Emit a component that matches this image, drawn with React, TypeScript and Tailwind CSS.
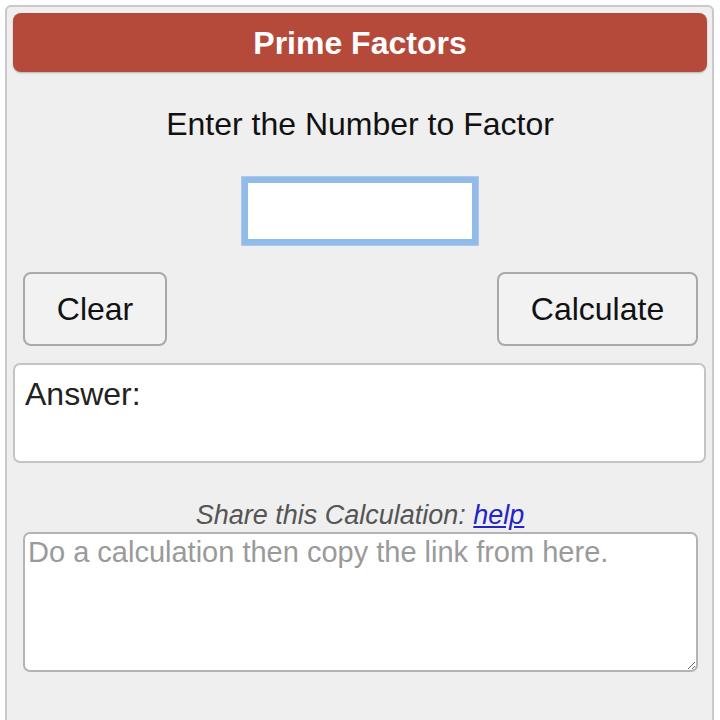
export default function App() {
  return (
    <div className="h-[720px] overflow-hidden bg-white pt-[5px] pl-[5px] font-['Liberation_Sans',Arial,sans-serif]">
      <div className="h-[730px] w-[709px] rounded-t-[6px] border-2 border-[#c9c9c9] bg-[#efefef] pl-[6px] pr-[5px] pt-[6px]">
        {/* header bar */}
        <div className="flex h-[59px] items-center justify-center rounded-[8px] bg-[#b64a3a] shadow-[0_1px_2px_rgba(0,0,0,0.25)]">
          <h1 className="text-[32px] font-bold leading-none text-white">Prime Factors</h1>
        </div>

        <p className="mt-[34px] text-center text-[32px] leading-[37px] text-[#111]">Enter the Number to Factor</p>

        <div className="mt-[34px] flex justify-center">
          <input
            type="text"
            className="h-[68px] w-[236px] border-[6px] border-[#93bbea] bg-white px-2 text-[30px] outline-none shadow-[0_0_0_1px_#a9c8ee]"
          />
        </div>

        <div className="mt-[27px] flex justify-between pl-[10px] pr-[9px]">
          <button className="h-[74px] w-[144px] rounded-[8px] border-2 border-[#a9a9a9] bg-[#f2f2f2] text-[32px] text-[#111]">
            Clear
          </button>
          <button className="h-[74px] w-[201px] rounded-[8px] border-2 border-[#a9a9a9] bg-[#f2f2f2] text-[32px] text-[#111]">
            Calculate
          </button>
        </div>

        <div className="mt-[17px] mr-[1px] h-[100px] rounded-[7px] border-2 border-[#c4c4c4] bg-white pl-[10px] pt-[11px]">
          <span className="text-[32px] leading-[37px] text-[#222]">Answer:</span>
        </div>

        <p className="mt-[36px] text-center text-[27px] italic leading-[32px] text-[#555]">
          Share this Calculation:{" "}
          <a href="#" className="text-[#2424c4] underline">
            help
          </a>
        </p>

        <div className="mt-[1px] pl-[10px] pr-[9px]">
          <textarea
            placeholder="Do a calculation then copy the link from here."
            className="block h-[140px] w-full resize rounded-[7px] border-2 border-[#b4b4b4] bg-white px-[3px] pt-[1px] text-[29px] leading-[34px] text-[#333] outline-none placeholder:text-[#9a9a9a]"
          />
        </div>
      </div>
    </div>
  )
}
